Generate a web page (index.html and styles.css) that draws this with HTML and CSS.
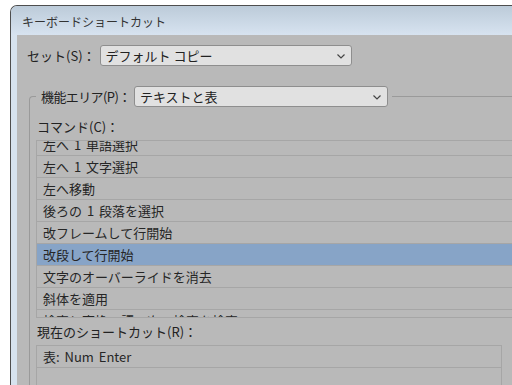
FILE: index.html
```html
<!DOCTYPE html>
<html lang="ja">
<head>
  <meta charset="UTF-8">
  <title>キーボードショートカット</title>
  <link rel="stylesheet" href="styles.css">
</head>
<body>
  <div class="window">
    <div class="titlebar">キーボードショートカット</div>
    <div class="content">
      <div class="set-row">
        <span class="lbl">セット(S)：</span>
        <div class="select set-select">デフォルト コピー
          <svg class="chev" width="8" height="5" viewBox="0 0 8 5"><polyline points="0.5,0.5 4,4 7.5,0.5" fill="none" stroke="#444" stroke-width="1.2"/></svg>
        </div>
      </div>

      <fieldset class="area">
        <legend>
          <span class="lbl area-lbl">機能エリア(P)：</span>
          <div class="select area-select">テキストと表
            <svg class="chev" width="8" height="5" viewBox="0 0 8 5"><polyline points="0.5,0.5 4,4 7.5,0.5" fill="none" stroke="#444" stroke-width="1.2"/></svg>
          </div>
        </legend>

        <div class="caption">コマンド(C)：</div>
        <div class="list">
          <div class="rows">
            <div class="row">左へ 1 単語選択</div>
            <div class="row">左へ 1 文字選択</div>
            <div class="row">左へ移動</div>
            <div class="row">後ろの 1 段落を選択</div>
            <div class="row">改フレームして行開始</div>
            <div class="row selected">改段して行開始</div>
            <div class="row">文字のオーバーライドを消去</div>
            <div class="row">斜体を適用</div>
            <div class="row">検索と変換：語の次の検索を検索</div>
          </div>
        </div>

        <div class="caption current">現在のショートカット(R)：</div>
        <div class="shortcuts">
          <div class="row">表: Num Enter</div>
          <div class="row"></div>
        </div>
      </fieldset>
    </div>
  </div>
</body>
</html>
```

FILE: styles.css
```css
html, body { margin: 0; height: 385px; overflow: hidden; }
body { background: #fff; font-family: "Noto Sans CJK JP", "Noto Sans", sans-serif; font-size: 13px; color: #222; }

.window { margin: 5px 0 0 10px; width: 540px; height: 420px; border: 1px solid #4e4e4e; border-right: none; border-radius: 7px 0 0 0; background: #d7e3ef; }
.titlebar { height: 29px; padding-left: 11px; line-height: 32px; font-size: 12px; color: #333; background: linear-gradient(#bccbd9, #d7e3f0); border-radius: 6px 0 0 0; }
.content { margin-left: 6px; height: 400px; background: #b9b9b9; padding: 10px 0 0 10px; }

.set-row { display: flex; align-items: center; gap: 4px; }
.lbl { line-height: 21px; white-space: nowrap; }
.area-lbl { width: 89px; letter-spacing: -0.6px; }
.select { position: relative; height: 19px; line-height: 19px; padding-left: 5px; background: #e1e1e1; border: 1px solid #8e8e8e; border-radius: 3px; box-sizing: content-box; white-space: nowrap; }
.set-select { width: 245px; }
.area-select { width: 247px; }
.chev { position: absolute; right: 6px; top: 8px; }

.area { margin: 20px 0 0 2px; padding: 0 0 0 6px; border: 1px solid #9a9a9a; border-right: none; border-bottom: none; border-radius: 4px 0 0 0; min-width: 0; }
.area legend { display: flex; align-items: center; gap: 4px; padding: 0 4px 0 5px; margin-left: 0; }

.caption { margin-top: 11px; padding-left: 1px; line-height: 18px; }
.caption.current { margin-top: 5px; }

.list { margin-top: 4px; height: 176px; overflow: hidden; border: 1px solid #a6a6a6; border-right: none; width: 480px; }
.rows { margin-top: -7px; }
.row { height: 21px; line-height: 21px; padding-left: 6px; border-bottom: 1px solid #a6a6a6; white-space: nowrap; color: #262626; word-spacing: 2px; }
.row.selected { background: #87a4c7; }

.shortcuts { margin-top: 4px; width: 464px; border: 1px solid #a6a6a6; height: 60px; }
```
